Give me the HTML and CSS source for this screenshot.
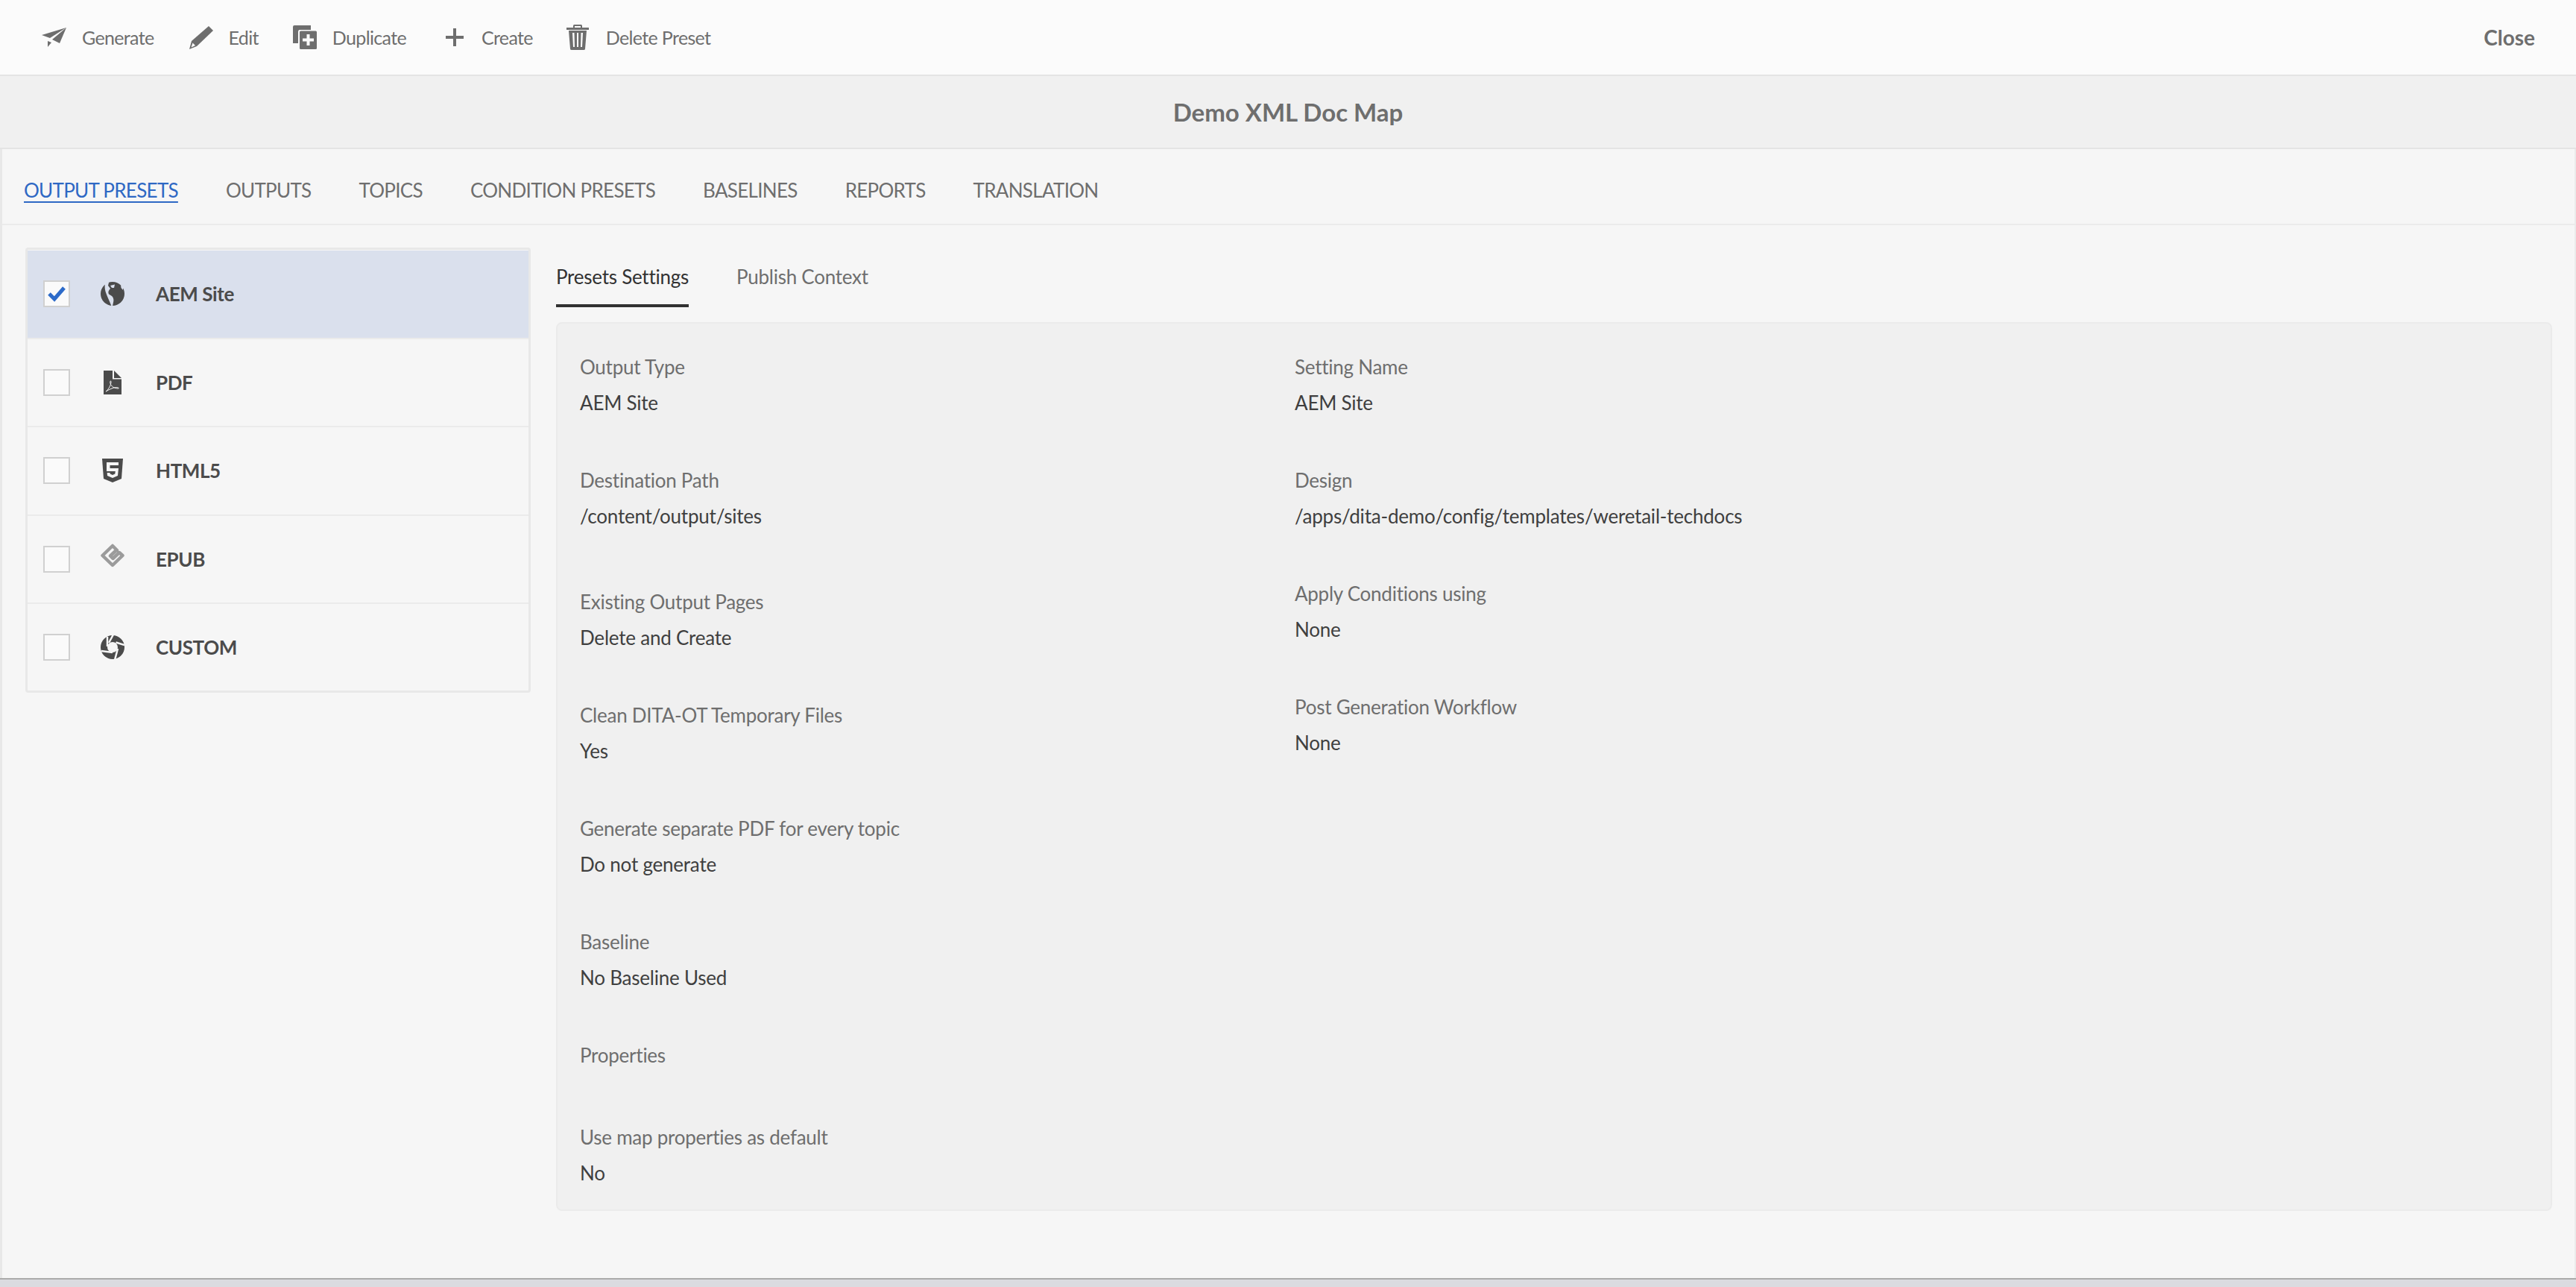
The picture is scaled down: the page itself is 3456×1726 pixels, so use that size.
FILE: index.html
```html
<!DOCTYPE html>
<html lang="en">
<head>
<meta charset="utf-8">
<title>Demo XML Doc Map</title>
<link rel="stylesheet" href="styles.css">
</head>
<body>
<header class="toolbar">
  <nav class="actions">
    <button class="action action-generate">
      <svg class="icon" width="34" height="28" viewBox="0 0 34 28"><path d="M0 11 33 1 11 15Z"/><path d="M33 1 24 22 14 17Z"/><path d="M8 19 13 21 8 27Z"/></svg>
      <span>Generate</span>
    </button>
    <button class="action action-edit">
      <svg class="icon" width="32" height="32" viewBox="0 0 32 32"><path d="M0 32 3 21 26 1 32 7 10 28Z"/><path class="cut" d="M2.500 29.500 4.500 23.500 8 27Z"/></svg>
      <span>Edit</span>
    </button>
    <button class="action action-duplicate">
      <svg class="icon" width="32" height="32" viewBox="0 0 32 32"><path d="M0 2Q0 0 2 0H24V6H9Q7 6 7 9V24H0Z"/><rect x="9" y="7.500" width="23" height="24.500" rx="1.500"/><path class="cut" d="M18.500 12H22.500V17.500H28V21.500H22.500V27H18.500V21.500H13V17.500H18.500Z"/></svg>
      <span>Duplicate</span>
    </button>
    <button class="action action-create">
      <svg class="icon" width="24" height="24" viewBox="0 0 24 24"><path d="M10 0H14V10H24V14H14V24H10V14H0V10H10Z"/></svg>
      <span>Create</span>
    </button>
    <button class="action action-delete">
      <svg class="icon" width="30" height="34" viewBox="0 0 30 34"><path d="M9 4V1.500Q9 0 10.500 0H19.500Q21 0 21 1.500V4H30V7H0V4ZM11 2V4H19V2Z"/><path fill-rule="evenodd" d="M3 8H27L25 32.500Q25 34 23 34H7Q5 34 5 32.500ZM8 11 9 30H11L10.500 11ZM14 11V30H16V11ZM19.500 11 19 30H21L22 11Z"/></svg>
      <span>Delete Preset</span>
    </button>
  </nav>
  <button class="close">Close</button>
</header>

<div class="titlebar"><h1>Demo XML Doc Map</h1></div>

<main class="content">
  <nav class="tabs">
    <a class="tab tab-active">OUTPUT PRESETS</a>
    <a class="tab">OUTPUTS</a>
    <a class="tab">TOPICS</a>
    <a class="tab">CONDITION PRESETS</a>
    <a class="tab">BASELINES</a>
    <a class="tab">REPORTS</a>
    <a class="tab">TRANSLATION</a>
  </nav>

  <div class="workspace">
    <ul class="presets">
      <li class="preset preset-selected">
        <span class="check"><svg width="30" height="30" viewBox="0 0 30 30"><path d="M5 15 12 22 25 7"/></svg></span>
        <span class="preset-icon">
          <svg width="32" height="32" viewBox="0 0 32 32"><circle cx="16" cy="16" r="16"/><path class="cut-sel" d="M6 3C4 12 10 20 14.500 32.500H16C17 27 19 23 15 19L11 16.500C9.500 14 11 11 13 9L10 5 11 1 8 1Z"/><path class="cut-sel" d="M13 5 19 3.500 18 8 15 8Z"/><path class="cut-sel" d="M27 4 30 7 30 11 27.500 8Z"/></svg>
        </span>
        <span class="preset-name">AEM Site</span>
      </li>
      <li class="preset">
        <span class="check"></span>
        <span class="preset-icon">
          <svg width="24" height="32" viewBox="0 0 24 32"><path d="M0 0H12V11.500H24V32H0Z"/><path d="M14 0 24 10H14Z"/><path class="swirl" d="M3 28C7 25 10 19 10 15 10 13 8 14 9 17 10 21 14 24 20 24 21 22 15 22 11 24 8 25 5 27 3 28Z"/></svg>
        </span>
        <span class="preset-name">PDF</span>
      </li>
      <li class="preset">
        <span class="check"></span>
        <span class="preset-icon">
          <svg width="28" height="32" viewBox="0 0 28 32"><path d="M0 0H28L26 27 14 32 2 27Z"/><path class="cut" d="M6 5H22V9H10.500V13H22L21 23 14 26 7 23 6.700 19H10.500L10.700 20.500 14 22 17.300 20.500 17.800 17H6Z"/></svg>
        </span>
        <span class="preset-name">HTML5</span>
      </li>
      <li class="preset">
        <span class="check"></span>
        <span class="preset-icon preset-icon-epub">
          <svg width="32" height="32" viewBox="0 0 32 32"><path class="epub" d="M22 9 16 3 2.500 16 16 29 29.500 16 25 12 16.500 20 13 16.500 21 9"/></svg>
        </span>
        <span class="preset-name">EPUB</span>
      </li>
      <li class="preset">
        <span class="check"></span>
        <span class="preset-icon">
          <svg width="32" height="32" viewBox="0 0 32 32"><circle cx="16" cy="16" r="16"/><circle class="cut" cx="16" cy="16" r="7"/><g class="blades"><path d="M11 10 17 -1"/><path d="M20.500 9.500 32 13"/><path d="M23 18 19 33"/><path d="M16 23 1 21"/><path d="M9 15 9 2"/></g></svg>
        </span>
        <span class="preset-name">CUSTOM</span>
      </li>
    </ul>

    <section class="details">
      <div class="subtabs">
        <a class="subtab subtab-active">Presets Settings</a>
        <a class="subtab">Publish Context</a>
      </div>
      <div class="panel">
        <div class="col">
          <div class="field"><div class="label">Output Type</div><div class="value">AEM Site</div></div>
          <div class="field field-tall"><div class="label">Destination Path</div><div class="value">/content/output/sites</div></div>
          <div class="field"><div class="label">Existing Output Pages</div><div class="value">Delete and Create</div></div>
          <div class="field"><div class="label">Clean DITA-OT Temporary Files</div><div class="value">Yes</div></div>
          <div class="field"><div class="label">Generate separate PDF for every topic</div><div class="value">Do not generate</div></div>
          <div class="field"><div class="label">Baseline</div><div class="value">No Baseline Used</div></div>
          <div class="field field-empty"><div class="label">Properties</div></div>
          <div class="field"><div class="label">Use map properties as default</div><div class="value">No</div></div>
        </div>
        <div class="col">
          <div class="field"><div class="label">Setting Name</div><div class="value">AEM Site</div></div>
          <div class="field"><div class="label">Design</div><div class="value">/apps/dita-demo/config/templates/weretail-techdocs</div></div>
          <div class="field"><div class="label">Apply Conditions using</div><div class="value">None</div></div>
          <div class="field"><div class="label">Post Generation Workflow</div><div class="value">None</div></div>
        </div>
      </div>
    </section>
  </div>
</main>
<div class="footer"></div>
</body>
</html>
```
FILE: styles.css
```css
* { box-sizing: border-box; }
html, body { height: 100%; }
body {
  margin: 0;
  display: flex;
  flex-direction: column;
  height: 1726px;
  overflow: hidden;
  font-family: "Lato", "Noto Sans", sans-serif;
  font-size: 26px;
  color: #4b4b4b;
  background: #f6f6f6;
}
button { font: inherit; border: 0; background: none; padding: 0; color: inherit; }
h1 { margin: 0; font: inherit; }
ul { margin: 0; padding: 0; list-style: none; }

.toolbar {
  flex: none;
  height: 102px;
  display: flex;
  align-items: center;
  justify-content: space-between;
  padding: 0 55px 0 56px;
  background: #fbfbfb;
  border-bottom: 2px solid #e4e4e4;
}
.actions { display: flex; align-items: center; }
.action { display: flex; align-items: center; color: #6e6e6e; font-size: 25px; letter-spacing: -0.65px; height: 100px; }
.action svg { fill: #6e6e6e; display: block; }
.action .cut { fill: #fbfbfb; }
.action-generate span { margin-left: 20px; }
.action-edit { margin-left: 47px; }
.action-edit span { margin-left: 21px; }
.action-duplicate { margin-left: 46px; }
.action-duplicate span { margin-left: 21px; }
.action-create { margin-left: 53px; }
.action-create span { margin-left: 24px; }
.action-delete { margin-left: 45px; }
.action-delete span { margin-left: 23px; }
.close { font-size: 28px; font-weight: 700; color: #6e6e6e; }

.titlebar {
  flex: none;
  height: 98px;
  display: flex;
  align-items: center;
  justify-content: center;
  background: #f0f0f0;
  border-bottom: 2px solid #e4e4e4;
  font-size: 33px;
  font-weight: 700;
  color: #6e6e6e;
}

.content {
  flex: 1;
  min-height: 0;
  border-left: 3px solid #e8e8e8;
  border-right: 2px solid #ebebeb;
  background: #f6f6f6;
  display: flex;
  flex-direction: column;
}
.tabs {
  flex: none;
  height: 102px;
  display: flex;
  align-items: center;
  gap: 64px;
  padding: 10px 0 0 29px;
  border-bottom: 2px solid #ebebeb;
  font-size: 26px;
  letter-spacing: -0.7px;
  color: #6e6e6e;
}
.tab-active { color: #2e68c4; text-decoration: underline; text-underline-offset: 5px; text-decoration-thickness: 2px; }

.workspace {
  flex: 1;
  min-height: 0;
  display: flex;
  align-items: flex-start;
  padding: 30px 30px 0 31px;
}
.presets {
  flex: none;
  width: 678px;
  border: 3px solid #e8e8e8;
  border-radius: 4px;
  padding: 1px 0 0;
}
.preset {
  height: 118.500px;
  display: flex;
  align-items: center;
  border-bottom: 2px solid #ebebeb;
}
.preset:last-child { border-bottom: 0; height: 116px; }
.preset-selected { background: #dae0ed; border-bottom-color: #ebebeb; }
.check {
  flex: none;
  width: 36px;
  height: 36px;
  margin-left: 21px;
  background: #fafafa;
  border: 2px solid #d0d0d0;
  display: flex;
  align-items: center;
  justify-content: center;
}
.check svg { fill: none; stroke: #2d6bc9; stroke-width: 5; display: block; flex: none; }
.preset-icon {
  flex: none;
  width: 34px;
  margin-left: 40px;
  display: flex;
  justify-content: center;
}
.preset-icon-epub { margin-top: -10px; }
.preset-icon svg { fill: #4b4b4b; display: block; }
.preset-icon .cut { fill: #f6f6f6; }
.preset-icon .cut-sel { fill: #dae0ed; }
.preset-icon .swirl { fill: none; stroke: #f6f6f6; stroke-width: 1; }
.preset-icon .epub { fill: none; stroke: #9b9b9b; stroke-width: 4.500; stroke-linejoin: round; stroke-linecap: round; }
.preset-icon .blades path { fill: none; stroke: #f6f6f6; stroke-width: 2.500; }
.preset-name { margin-left: 41px; font-size: 26px; font-weight: 700; letter-spacing: -0.4px; }

.details { flex: 1; min-width: 0; margin-left: 34px; align-self: stretch; display: flex; flex-direction: column; }
.subtabs { display: flex; gap: 64px; height: 80px; margin-bottom: 20px; letter-spacing: -0.25px; }
.subtab { height: 80px; line-height: 78px; color: #6e6e6e; }
.subtab-active { color: #323232; border-bottom: 4px solid #323232; }
.panel {
  height: 1192px;
  display: flex;
  background: #f0f0f0;
  border: 2px solid #ebebeb;
  border-radius: 8px;
  padding: 36px 30px 0;
}
.col { width: 959px; flex: none; }
.field { height: 152px; }
.field-tall { height: 163px; }
.field-empty { height: 110px; }
.label { height: 46px; line-height: 44px; color: #6e6e6e; letter-spacing: -0.25px; }
.value { height: 48px; line-height: 48px; color: #3f3f3f; letter-spacing: -0.22px; }

.footer { flex: none; height: 12px; background: #dbdbe0; border-top: 2px solid #ababab; }
```
